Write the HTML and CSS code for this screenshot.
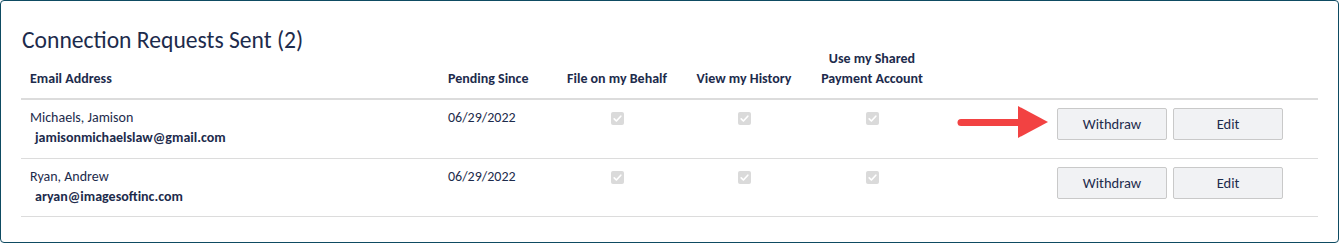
FILE: index.html
```html
<!DOCTYPE html>
<html>
<head>
<meta charset="utf-8">
<link rel="stylesheet" href="styles.css">
</head>
<body>
<div class="card">
  <h2 class="title">Connection Requests Sent (2)</h2>
  <table class="requests">
    <colgroup>
      <col class="c-email"><col class="c-date"><col class="c-file"><col class="c-hist"><col class="c-pay"><col class="c-act">
    </colgroup>
    <thead>
      <tr>
        <th class="left first">Email Address</th>
        <th class="left">Pending Since</th>
        <th>File on my Behalf</th>
        <th>View my History</th>
        <th>Use my Shared<br>Payment Account</th>
        <th></th>
      </tr>
    </thead>
    <tbody>
      <tr>
        <td class="first"><div class="name">Michaels, Jamison</div><div class="email">jamisonmichaelslaw@gmail.com</div></td>
        <td>06/29/2022</td>
        <td class="center"><span class="chk"><svg viewBox="0 0 13 13" width="13" height="13"><path d="M3.2 6.8 L5.4 9 L9.8 4.2" fill="none" stroke="#fff" stroke-width="1.7" stroke-linecap="round" stroke-linejoin="round"/></svg></span></td>
        <td class="center"><span class="chk"><svg viewBox="0 0 13 13" width="13" height="13"><path d="M3.2 6.8 L5.4 9 L9.8 4.2" fill="none" stroke="#fff" stroke-width="1.7" stroke-linecap="round" stroke-linejoin="round"/></svg></span></td>
        <td class="center"><span class="chk"><svg viewBox="0 0 13 13" width="13" height="13"><path d="M3.2 6.8 L5.4 9 L9.8 4.2" fill="none" stroke="#fff" stroke-width="1.7" stroke-linecap="round" stroke-linejoin="round"/></svg></span></td>
        <td class="actions"><div class="btns"><button class="btn">Withdraw</button><button class="btn">Edit</button></div></td>
      </tr>
      <tr class="second">
        <td class="first"><div class="name">Ryan, Andrew</div><div class="email">aryan@imagesoftinc.com</div></td>
        <td>06/29/2022</td>
        <td class="center"><span class="chk"><svg viewBox="0 0 13 13" width="13" height="13"><path d="M3.2 6.8 L5.4 9 L9.8 4.2" fill="none" stroke="#fff" stroke-width="1.7" stroke-linecap="round" stroke-linejoin="round"/></svg></span></td>
        <td class="center"><span class="chk"><svg viewBox="0 0 13 13" width="13" height="13"><path d="M3.2 6.8 L5.4 9 L9.8 4.2" fill="none" stroke="#fff" stroke-width="1.7" stroke-linecap="round" stroke-linejoin="round"/></svg></span></td>
        <td class="center"><span class="chk"><svg viewBox="0 0 13 13" width="13" height="13"><path d="M3.2 6.8 L5.4 9 L9.8 4.2" fill="none" stroke="#fff" stroke-width="1.7" stroke-linecap="round" stroke-linejoin="round"/></svg></span></td>
        <td class="actions"><div class="btns"><button class="btn">Withdraw</button><button class="btn">Edit</button></div></td>
      </tr>
    </tbody>
  </table>
  <svg class="arrow" width="96" height="33" viewBox="0 0 96 33">
    <line x1="6" y1="16.5" x2="66" y2="16.5" stroke="#f24242" stroke-width="7" stroke-linecap="round"/>
    <polygon points="63,0 93,16 63,32" fill="#f24242"/>
  </svg>
</div>
</body>
</html>
```
FILE: styles.css
```css
* { box-sizing: border-box; }
html, body { margin: 0; padding: 0; background: #fff; }
body {
  font-family: Calibri, Carlito, Lato, "Liberation Sans", sans-serif;
  color: #1d2b4c;
}
.card {
  position: relative;
  width: 1339px;
  height: 243px;
  border: 1px solid #0e4b62;
  border-radius: 4px;
  padding: 29px 20px 0 20px;
}
.title {
  margin: 0 0 -1px 1px;
  font-size: 23.6px;
  font-weight: 400;
  line-height: 20px;
  color: #1d2b4c;
}
.requests {
  border-collapse: collapse;
  table-layout: fixed;
  width: 1297px;
  font-size: 14px;
  margin-top: 0;
}
.c-email { width: 419px; }
.c-date { width: 113px; }
.c-file { width: 128px; }
.c-hist { width: 126px; }
.c-pay { width: 130px; }
.c-act { width: 381px; }
th {
  font-weight: 700;
  line-height: 20px;
  text-align: center;
  vertical-align: bottom;
  padding: 0 0 9px 0;
  border-bottom: 2px solid #dcdcdc;
}
th.left { text-align: left; padding-left: 8px; }
th.first, td.first { padding-left: 9px; }
td {
  line-height: 20px;
  vertical-align: top;
  padding: 8px 0 10px 8px;
  border-bottom: 1px solid #dcdcdc;
}
.second td { padding-bottom: 9px; }
td.center { text-align: center; padding-left: 0; }
.email { font-weight: 700; padding-left: 5px; }
.chk {
  display: inline-block;
  width: 13px;
  height: 13px;
  margin-top: 4px;
  border-radius: 2px;
  background: #dadada;
  vertical-align: top;
}
.chk svg { display: block; }
td.actions { padding: 8px 35px 0 0; vertical-align: top; }
.btns { display: flex; justify-content: flex-end; gap: 6px; }
.btn {
  width: 110px;
  height: 32px;
  border: 1px solid #c9c9c9;
  border-radius: 2px;
  background: #f1f2f4;
  font-family: inherit;
  font-size: 14.5px;
  color: #1d2b4c;
  padding: 0;
}
.arrow {
  position: absolute;
  left: 954px;
  top: 105px;
}
```
